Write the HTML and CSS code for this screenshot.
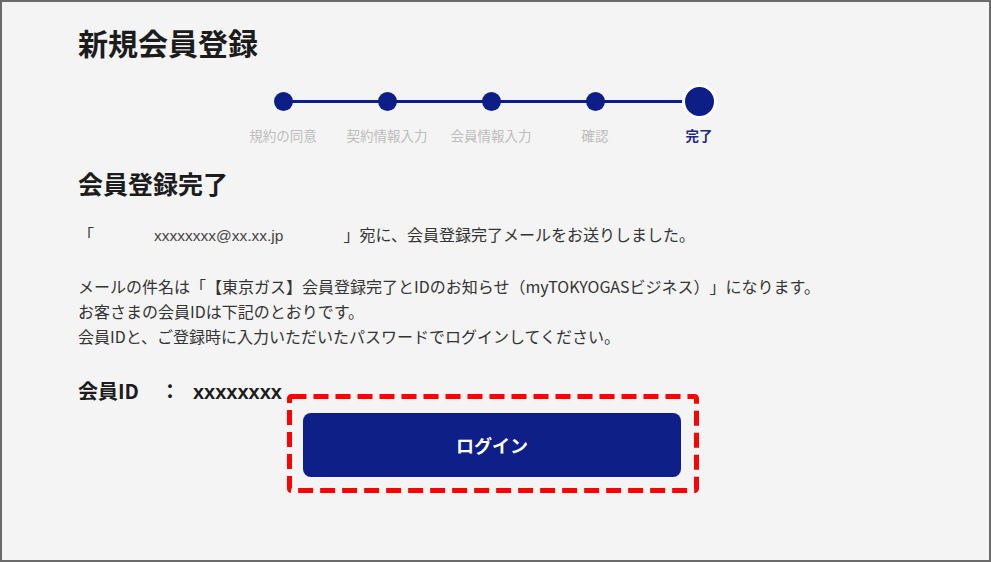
FILE: index.html
```html
<!DOCTYPE html>
<html lang="ja">
<head>
    <meta charset="UTF-8">
    <meta name="viewport" content="width=device-width, initial-scale=1.0">
    <title>新規会員登録 - 会員登録完了</title>
    <link rel="stylesheet" href="styles.css">
</head>
<body>
    <div class="frame">
        <div class="page">
            <h1 class="page-title">新規会員登録</h1>

            <ol class="steps">
                <li class="step"><span class="dot"></span><span class="step-label">規約の同意</span></li>
                <li class="step"><span class="dot"></span><span class="step-label">契約情報入力</span></li>
                <li class="step"><span class="dot"></span><span class="step-label">会員情報入力</span></li>
                <li class="step"><span class="dot"></span><span class="step-label">確認</span></li>
                <li class="step current"><span class="dot"></span><span class="step-label">完了</span></li>
            </ol>

            <h2 class="section-title">会員登録完了</h2>

            <p class="sent">「<span class="mail">xxxxxxxx@xx.xx.jp</span>」宛に、会員登録完了メールをお送りしました。</p>

            <p class="notice">
                メールの件名は「【東京ガス】会員登録完了とIDのお知らせ（myTOKYOGASビジネス）」になります。<br>
                お客さまの会員IDは下記のとおりです。<br>
                会員IDと、ご登録時に入力いただいたパスワードでログインしてください。
            </p>

            <div class="member-id">
                <span class="member-label">会員ID</span><span class="member-colon">：</span><span class="member-value">xxxxxxxx</span>
            </div>

            <div class="login-area">
                <svg class="highlight" width="412" height="99" viewBox="0 0 412 99">
                    <rect x="2.5" y="2.5" width="407" height="94" rx="2" fill="none" stroke="#ff0000" stroke-width="5" stroke-dasharray="15 7"/>
                </svg>
                <button class="login-btn">ログイン</button>
            </div>
        </div>
    </div>
</body>
</html>
```

FILE: styles.css
```css
body {
    margin: 0;
    font-family: "Noto Sans CJK JP", "Noto Sans", sans-serif;
    color: #333;
    text-spacing-trim: space-all;
}
.frame {
    width: 991px;
    height: 562px;
    box-sizing: border-box;
    border: 2px solid #6b6b6b;
    background-color: #f4f4f4;
    overflow: hidden;
}
.page {
    width: 826px;
    padding: 22px 0 0 76px;
}
.page-title {
    margin: 0;
    font-size: 30px;
    line-height: 36px;
    font-weight: 700;
    color: #1c1c1c;
}
.steps {
    position: relative;
    display: flex;
    width: 520px;
    margin: 23px auto 0;
    padding: 0;
    list-style: none;
}
.steps::before {
    content: "";
    position: absolute;
    left: 52px;
    right: 52px;
    top: 16.5px;
    height: 3px;
    background-color: #0d1e86;
}
.step {
    width: 104px;
    display: flex;
    flex-direction: column;
    align-items: center;
}
.dot {
    position: relative;
    z-index: 1;
    width: 19px;
    height: 19px;
    margin: 8.5px 0;
    border-radius: 50%;
    background-color: #0d1e86;
}
.step.current .dot {
    width: 29px;
    height: 29px;
    margin: 0.5px 0;
    border: 3px solid #fff;
}
.step-label {
    margin-top: 6px;
    font-size: 13.5px;
    line-height: 20px;
    color: #bdbdbd;
    white-space: nowrap;
}
.step.current .step-label {
    color: #1f2a80;
    font-weight: 700;
}
.section-title {
    margin: 22px 0 0;
    font-size: 25px;
    line-height: 32px;
    font-weight: 700;
    color: #1c1c1c;
}
.sent {
    margin: 23px 0 0;
    font-size: 16px;
    line-height: 24px;
}
.mail {
    margin: 0 60px;
    font-family: "Liberation Sans", Arial, sans-serif;
    font-size: 15.5px;
    color: #444;
}
.notice {
    margin: 26px 0 0;
    font-size: 16px;
    line-height: 25px;
}
.member-id {
    height: 18px;
    margin-top: 33px;
    font-size: 20px;
    line-height: 18px;
    font-weight: 700;
    color: #1c1c1c;
    white-space: nowrap;
}
.member-label {
    display: inline-block;
    width: 82px;
}
.member-colon {
    display: inline-block;
    width: 20px;
    text-align: center;
}
.member-value {
    margin-left: 13px;
    font-family: "Liberation Sans", Arial, sans-serif;
}
.login-area {
    position: relative;
    width: 412px;
    height: 99px;
    box-sizing: border-box;
    margin: -6px 0 0 209px;
    padding: 19px 18px 16px 16px;
}
.highlight {
    position: absolute;
    left: 0;
    top: 0;
}
.login-btn {
    display: block;
    width: 378px;
    height: 64px;
    border: none;
    border-radius: 8px;
    background-color: #0f1f88;
    color: #fff;
    font-family: "Noto Sans CJK JP", sans-serif;
    font-size: 18px;
    font-weight: 700;
    cursor: pointer;
}
```
